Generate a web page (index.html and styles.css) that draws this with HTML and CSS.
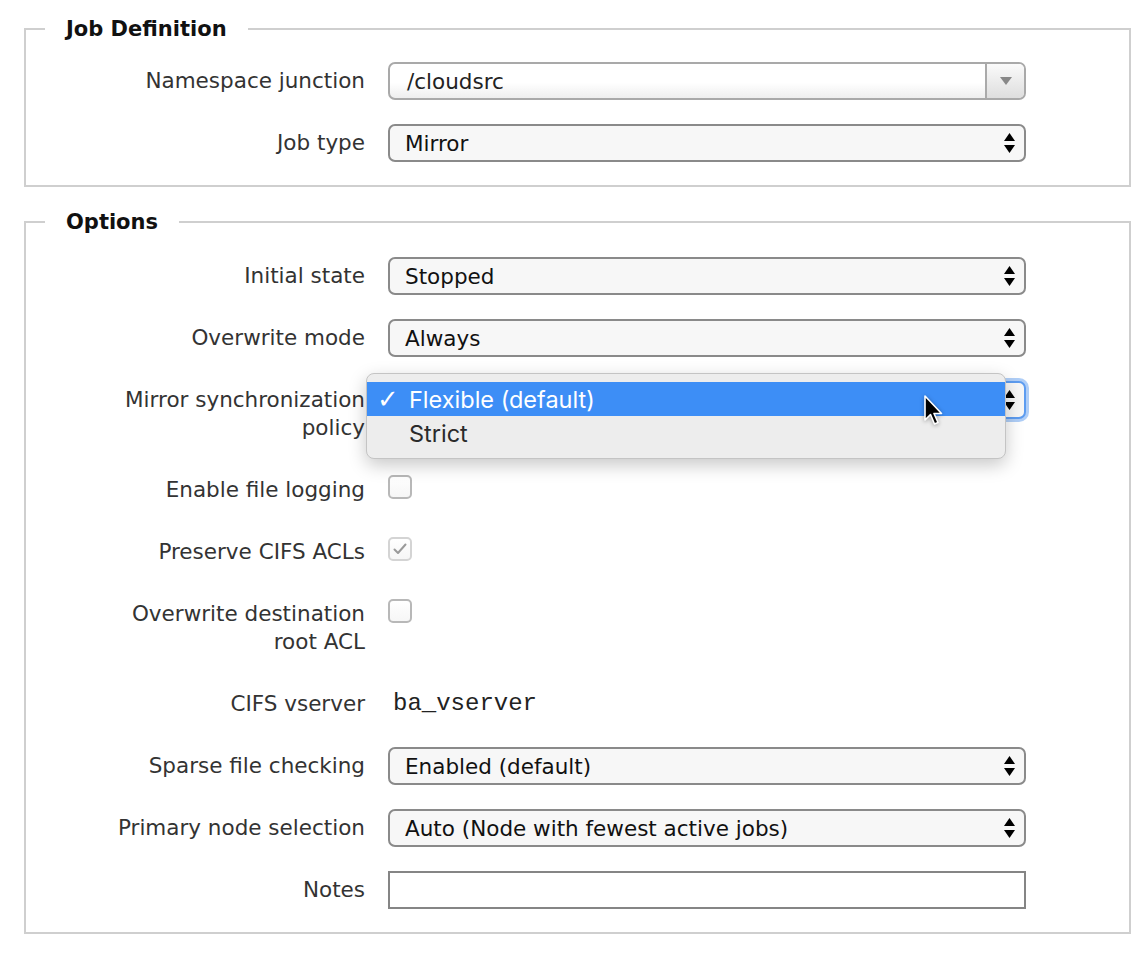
FILE: index.html
```html
<!DOCTYPE html>
<html>
<head>
<meta charset="utf-8">
<link rel="stylesheet" href="styles.css">
</head>
<body>
<div class="page">
  <fieldset class="group first">
    <legend class="legend">Job Definition</legend>
    <div class="rows">
      <div class="row">
        <div class="label">Namespace junction</div>
        <div class="control">
          <div class="combo">
            <span class="combo-text">/cloudsrc</span>
            <span class="combo-btn"><svg width="12" height="8" viewBox="0 0 12 8"><path d="M0 0H12L6 8Z" fill="#888"/></svg></span>
          </div>
        </div>
      </div>
      <div class="row">
        <div class="label">Job type</div>
        <div class="control">
          <div class="select"><span>Mirror</span><svg class="updown" width="11" height="20" viewBox="0 0 11 20"><path d="M5.5 0L11 8H0Z M0 12H11L5.5 20Z" fill="#000"/></svg></div>
        </div>
      </div>
    </div>
  </fieldset>

  <fieldset class="group second">
    <legend class="legend">Options</legend>
    <div class="rows">
      <div class="row">
        <div class="label">Initial state</div>
        <div class="control">
          <div class="select"><span>Stopped</span><svg class="updown" width="11" height="20" viewBox="0 0 11 20"><path d="M5.5 0L11 8H0Z M0 12H11L5.5 20Z" fill="#000"/></svg></div>
        </div>
      </div>
      <div class="row">
        <div class="label">Overwrite mode</div>
        <div class="control">
          <div class="select"><span>Always</span><svg class="updown" width="11" height="20" viewBox="0 0 11 20"><path d="M5.5 0L11 8H0Z M0 12H11L5.5 20Z" fill="#000"/></svg></div>
        </div>
      </div>
      <div class="row">
        <div class="label">Mirror synchronization<br>policy</div>
        <div class="control menu-anchor">
          <div class="select focused"><span class="hidden-text">Flexible (default)</span><svg class="updown" width="11" height="20" viewBox="0 0 11 20"><path d="M5.5 0L11 8H0Z M0 12H11L5.5 20Z" fill="#000"/></svg></div>
          <div class="menu">
            <div class="menu-item selected"><span class="check">✓</span>Flexible (default)</div>
            <div class="menu-item"><span class="check"></span>Strict</div>
            <svg class="cursor" width="22" height="34" viewBox="0 0 22 34"><path d="M2 2V26L7.5 20.5L11.5 30L15 28.5L11 19.5H18.5Z" fill="#000" stroke="#fff" stroke-width="1.6" stroke-linejoin="round"/></svg>
          </div>
        </div>
      </div>
      <div class="row">
        <div class="label">Enable file logging</div>
        <div class="control"><span class="checkbox"></span></div>
      </div>
      <div class="row">
        <div class="label">Preserve CIFS ACLs</div>
        <div class="control"><span class="checkbox disabled"><svg width="14" height="12" viewBox="0 0 14 12"><path d="M1.5 6.5L5 10L12.5 1.5" fill="none" stroke="#9a9a9a" stroke-width="2" stroke-linecap="round" stroke-linejoin="round"/></svg></span></div>
      </div>
      <div class="row">
        <div class="label">Overwrite destination<br>root ACL</div>
        <div class="control"><span class="checkbox"></span></div>
      </div>
      <div class="row">
        <div class="label">CIFS vserver</div>
        <div class="control"><span class="value">ba_vserver</span></div>
      </div>
      <div class="row">
        <div class="label">Sparse file checking</div>
        <div class="control">
          <div class="select"><span>Enabled (default)</span><svg class="updown" width="11" height="20" viewBox="0 0 11 20"><path d="M5.5 0L11 8H0Z M0 12H11L5.5 20Z" fill="#000"/></svg></div>
        </div>
      </div>
      <div class="row">
        <div class="label">Primary node selection</div>
        <div class="control">
          <div class="select"><span>Auto (Node with fewest active jobs)</span><svg class="updown" width="11" height="20" viewBox="0 0 11 20"><path d="M5.5 0L11 8H0Z M0 12H11L5.5 20Z" fill="#000"/></svg></div>
        </div>
      </div>
      <div class="row">
        <div class="label">Notes</div>
        <div class="control"><div class="textbox"></div></div>
      </div>
    </div>
  </fieldset>
</div>
</body>
</html>
```

FILE: styles.css
```css
html, body {
  margin: 0;
  padding: 0;
  background: #fff;
}
body {
  font-family: "DejaVu Sans", Verdana, sans-serif;
  font-size: 21.5px;
  color: #333;
}
.page {
  padding: 15px 17px 0 24px;
}
.group {
  margin: 0;
  border: 2px solid #cfcfcf;
  min-width: 0;
}
.group.first {
  padding: 19px 0 23px 0;
  margin-bottom: 21px;
}
.group.second {
  padding: 21px 0 23px 0;
}
.legend {
  margin-left: 19px;
  padding: 0 21px;
  font-weight: bold;
  font-size: 21px;
  color: #111;
  line-height: 28px;
}
.rows {
  display: flex;
  flex-direction: column;
  gap: 24px;
}
.row {
  display: grid;
  grid-template-columns: 339px 638px;
  column-gap: 23px;
  align-items: start;
  min-height: 38px;
}
.label {
  text-align: right;
  padding: 5px 0;
  line-height: 28px;
}
.control {
  position: relative;
}
.select {
  box-sizing: border-box;
  height: 38px;
  border: 2px solid #8a8a8a;
  border-radius: 7px;
  background: #f7f7f7;
  display: flex;
  align-items: center;
  justify-content: space-between;
  padding: 0 9px 0 15px;
  color: #111;
}
.select.focused {
  border-color: #5d9cf0;
  box-shadow: 0 0 0 3px rgba(110, 165, 240, 0.55);
}
.hidden-text {
  visibility: hidden;
}
.updown {
  display: block;
}
.combo {
  box-sizing: border-box;
  height: 38px;
  border: 2px solid #a9a9a9;
  border-radius: 7px;
  background: linear-gradient(#ffffff 0%, #ffffff 55%, #eeeeee 100%);
  display: flex;
  align-items: stretch;
  overflow: hidden;
  color: #222;
}
.combo-text {
  flex: 1;
  display: flex;
  align-items: center;
  padding-left: 17px;
}
.combo-btn {
  width: 37px;
  border-left: 2px solid #aaaaaa;
  background: linear-gradient(#fafafa, #dedede);
  display: flex;
  align-items: center;
  justify-content: center;
}
.checkbox {
  display: flex;
  align-items: center;
  justify-content: center;
  box-sizing: border-box;
  width: 24px;
  height: 24px;
  margin-top: 4px;
  border: 2px solid #b8b8b8;
  border-radius: 5px;
  background: linear-gradient(#ffffff, #f6f6f6);
}
.checkbox.disabled {
  border-color: #d4d4d4;
}
.value {
  display: block;
  padding: 5px 0 5px 5px;
  line-height: 28px;
  font-family: "Liberation Mono", "Courier New", monospace;
  font-size: 24px;
  color: #222;
}
.textbox {
  box-sizing: border-box;
  height: 38px;
  border: 2px solid #858585;
  background: #fff;
}
.menu {
  position: absolute;
  left: -22px;
  top: -8px;
  width: 640px;
  box-sizing: border-box;
  padding: 8px 0 8px 0;
  background: #ededed;
  border: 1px solid #c4c4c4;
  border-radius: 8px;
  box-shadow: 0 6px 18px rgba(0, 0, 0, 0.22);
  font-family: Inter, "Liberation Sans", sans-serif;
  font-size: 23.5px;
  color: #2a2a2a;
  z-index: 2;
}
.menu-item {
  display: flex;
  align-items: center;
  height: 34px;
  padding-left: 10px;
}
.menu-item.selected {
  background: #3d8ef6;
  color: #fff;
}
.check {
  display: inline-block;
  width: 32px;
  font-size: 26px;
  font-family: "DejaVu Sans", sans-serif;
  font-weight: bold;
}
.cursor {
  position: absolute;
  left: 556px;
  top: 20px;
  filter: drop-shadow(0 1px 2px rgba(0, 0, 0, 0.35));
}
```
